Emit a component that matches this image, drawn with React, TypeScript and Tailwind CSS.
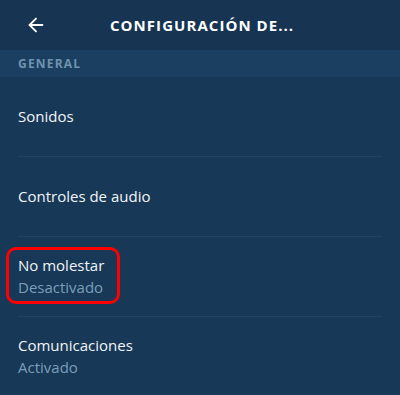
import { ArrowLeft } from "lucide-react";

const items = [
  { title: "Sonidos" },
  { title: "Controles de audio" },
  { title: "No molestar", sub: "Desactivado", marked: true },
  { title: "Comunicaciones", sub: "Activado" },
];

export default function App() {
  return (
    <div
      className="w-[400px] h-[395px] overflow-hidden bg-[#173856] text-white"
      style={{ fontFamily: '"Open Sans", "Noto Sans", sans-serif' }}
    >
      <header className="h-[50px] bg-[#173553] flex items-center relative">
        <ArrowLeft className="absolute left-[25px] w-[22px] h-[22px] text-white" strokeWidth={2} />
        <h1 className="pl-[110px] text-[15px] font-bold tracking-[0.07em]">CONFIGURACIÓN DE...</h1>
      </header>
      <div className="h-[27px] bg-[#1b3f61] flex items-center px-[18px]">
        <span className="text-[12px] font-bold tracking-[0.1em] text-[#6f93ad]">GENERAL</span>
      </div>
      <ul className="px-[18px]">
        {items.map((it, i) => (
          <li
            key={it.title}
            className={`h-[80px] flex flex-col justify-center pb-[2px] ${i < items.length - 1 ? "border-b border-[#21435f]" : ""}`}
          >
            <div className="relative self-start">
              {it.marked && (
                <div className="absolute -left-[12px] -top-[7px] w-[114px] h-[57px] border-[3px] border-[#ff0000] rounded-[10px]" />
              )}
              <div className="text-[15px] leading-[22px] text-[#f2f5f8]">{it.title}</div>
              {it.sub && <div className="text-[15px] leading-[22px] text-[#7a9fbb]">{it.sub}</div>}
            </div>
          </li>
        ))}
      </ul>
    </div>
  );
}
